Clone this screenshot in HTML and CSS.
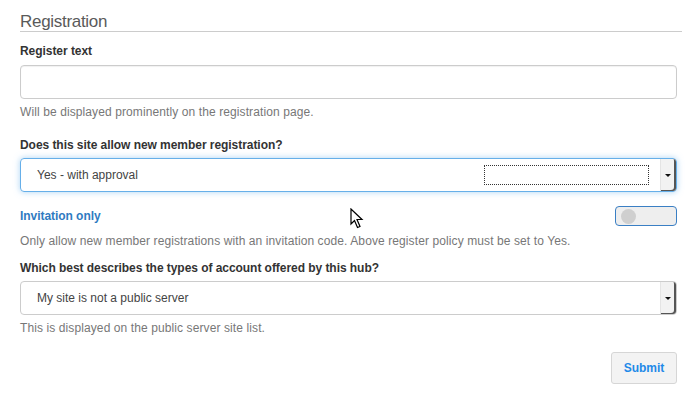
FILE: index.html
```html
<!DOCTYPE html>
<html>
<head>
<meta charset="utf-8">
<link rel="stylesheet" href="styles.css">
</head>
<body>
<div class="page">
  <h3 class="section-title">Registration</h3>

  <div class="field">
    <label class="label">Register text</label>
    <div class="input"></div>
    <div class="help">Will be displayed prominently on the registration page.</div>
  </div>

  <div class="field">
    <label class="label">Does this site allow new member registration?</label>
    <div class="select focused">
      <span class="select-value">Yes - with approval</span>
      <span class="focus-ring"></span>
      <span class="select-btn"><span class="caret"></span></span>
    </div>
  </div>

  <div class="field">
    <div class="toggle-row">
      <label class="label blue">Invitation only</label>
      <div class="toggle"><span class="knob"></span></div>
    </div>
    <div class="help">Only allow new member registrations with an invitation code. Above register policy must be set to Yes.</div>
  </div>

  <div class="field tight">
    <label class="label">Which best describes the types of account offered by this hub?</label>
    <div class="select">
      <span class="select-value">My site is not a public server</span>
      <span class="select-btn"><span class="caret"></span></span>
    </div>
    <div class="help">This is displayed on the public server site list.</div>
  </div>

  <div class="actions">
    <button class="submit">Submit</button>
  </div>
</div>

<svg class="cursor" width="14" height="22" viewBox="0 0 14 22">
  <path d="M1 1 L1 16 L4.5 12.5 L7.5 19.5 L10 18.5 L7 11.5 L12 11.5 Z" fill="#fff" stroke="#000" stroke-width="1.2" stroke-linejoin="miter"/>
</svg>
</body>
</html>
```

FILE: styles.css
```css
html, body {
  margin: 0;
  padding: 0;
  background: #fff;
}
body {
  font-family: "Liberation Sans", Arial, sans-serif;
  font-size: 12px;
  color: #333;
  position: relative;
  width: 691px;
  height: 401px;
  overflow: hidden;
}
.page {
  width: 657px;
  padding: 12px 0 0 20px;
}
.section-title {
  margin: 0 -5px 0 0;
  font-size: 17px;
  font-weight: normal;
  line-height: 19px;
  color: #5a5a5a;
  border-bottom: 1px solid #ccc;
  letter-spacing: -0.3px;
}
.field {
  display: flex;
  flex-direction: column;
}
.field:first-of-type {
  margin-top: 11px;
}
.field + .field {
  margin-top: 16px;
}
.field.tight {
  margin-top: 10px;
}
.label {
  display: block;
  font-weight: bold;
  line-height: 17px;
  color: #333;
  margin-bottom: 5px;
  letter-spacing: -0.05px;
}
.label.blue {
  color: #2f7bc1;
  margin-bottom: 0;
}
.input {
  height: 32px;
  border: 1px solid #ccc;
  border-radius: 4px;
  box-shadow: inset 0 1px 1px rgba(0,0,0,.06);
}
.help {
  margin-top: 5px;
  line-height: 17px;
  color: #777;
  letter-spacing: 0.1px;
}
.select {
  position: relative;
  height: 32px;
  margin-top: -1px;
  border: 1px solid #ccc;
  border-radius: 4px;
  display: flex;
  align-items: center;
}
.select.focused {
  border-color: #66afe9;
  box-shadow: 0 0 6px rgba(102,175,233,.55);
}
.select-value {
  padding-left: 16px;
  flex: 1;
  color: #444;
}
.focus-ring {
  position: absolute;
  left: 463px;
  top: 6px;
  width: 163px;
  height: 18px;
  border: 1px dotted #333;
}
.select-btn {
  position: absolute;
  right: 0;
  top: 0;
  bottom: 0;
  width: 15px;
  background: #f2f2f2;
  border-left: 1px solid #e4e4e4;
  box-shadow: inset -2px -1px 0 #555;
  border-radius: 0 3px 3px 0;
  display: flex;
  align-items: center;
  justify-content: center;
}
.caret {
  width: 0;
  height: 0;
  border-left: 3px solid transparent;
  border-right: 3px solid transparent;
  border-top: 3px solid #111;
  margin-right: 2px;
}
.toggle-row {
  display: flex;
  justify-content: space-between;
  align-items: center;
  height: 22px;
  margin-top: -3px;
}
.toggle {
  width: 55px;
  height: 18px;
  border: 1.5px solid #3a7fc4;
  border-radius: 4px;
  background: #eee;
  display: flex;
  align-items: center;
  padding-left: 5px;
}
.knob {
  width: 15px;
  height: 15px;
  border-radius: 50%;
  background: #cfcfcf;
}
.field .toggle-row + .help {
  margin-top: 6px;
}
.actions {
  display: flex;
  justify-content: flex-end;
  margin-top: 15px;
}
.submit {
  width: 66px;
  height: 32px;
  border: 1px solid #d6d6d6;
  border-radius: 3px;
  background: #f3f3f3;
  color: #1f8ae8;
  font-family: "Liberation Sans", Arial, sans-serif;
  font-size: 12px;
  font-weight: bold;
  padding: 0;
}
.cursor {
  position: absolute;
  left: 350px;
  top: 208px;
}
```
